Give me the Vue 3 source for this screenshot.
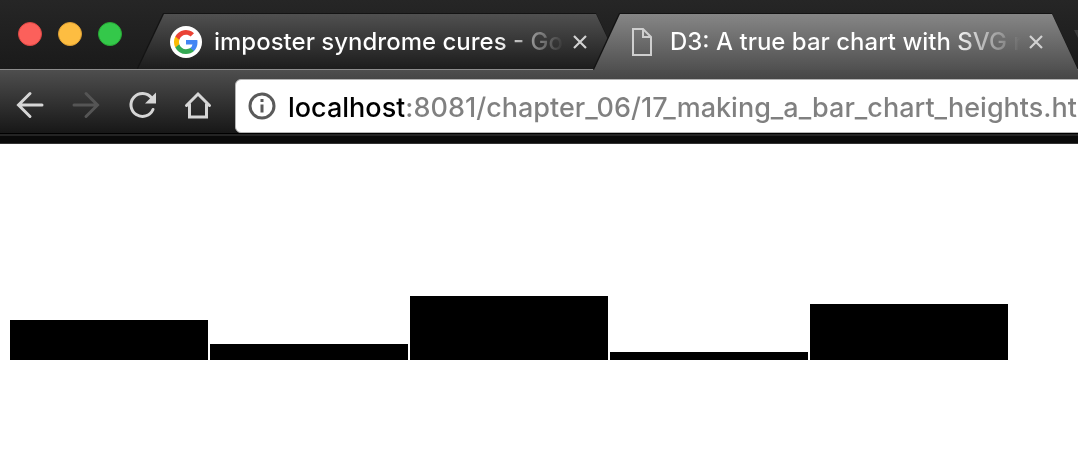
<script setup>
import { ref } from 'vue'

const url = ref('localhost:8081/chapter_06/17_making_a_bar_chart_heights.html')
const tabs = [
  { title: 'imposter syndrome cures - Google Search', icon: 'google', active: false },
  { title: 'D3: A true bar chart with SVG rects', icon: 'page', active: true },
]
const dataset = [5, 2, 8, 1, 7]
const scale = 8
</script>

<template>
  <div class="browser">
    <header class="tabstrip">
      <div class="lights">
        <button class="light red" aria-label="Close window"></button>
        <button class="light yellow" aria-label="Minimize window"></button>
        <button class="light green" aria-label="Zoom window"></button>
      </div>
      <div class="tabs" role="tablist">
        <div v-for="t in tabs" :key="t.icon" class="tab-outline" :class="{ active: t.active }">
          <div class="tab">
            <svg v-if="t.icon === 'google'" class="favicon" viewBox="0 0 32 32" aria-hidden="true">
              <circle cx="16" cy="16" r="16" fill="#fff" />
              <g transform="translate(4 4)">
                <path fill="#4285f4" d="M23.5 12.3c0-.8-.1-1.6-.2-2.3H12v4.5h6.5a5.600 5.600 0 0 1-2.400 3.600v3h3.900c2.200-2.100 3.500-5.100 3.500-8.800z" />
                <path fill="#34a853" d="M12 24c3.200 0 6-1.100 8-2.900l-3.900-3c-1.100.7-2.500 1.200-4.100 1.200-3.100 0-5.800-2.100-6.700-5H1.300v3.100A12 12 0 0 0 12 24z" />
                <path fill="#fbbc05" d="M5.300 14.300a7.200 7.200 0 0 1 0-4.600V6.600h-4a12 12 0 0 0 0 10.800z" />
                <path fill="#ea4335" d="M12 4.800c1.800 0 3.300.6 4.600 1.800L20 3.200A12 12 0 0 0 1.300 6.600l4 3.100c.9-2.800 3.600-4.900 6.700-4.900z" />
              </g>
            </svg>
            <svg v-else class="favicon" viewBox="0 0 32 32" aria-hidden="true">
              <path d="M7 3h10l8 8v18H7zM17 3v8h8" fill="none" stroke="#cfcfcf" stroke-width="2" />
            </svg>
            <button class="title" role="tab" :aria-selected="t.active">{{ t.title }}</button>
            <button class="close" aria-label="Close tab">
              <svg viewBox="0 0 14 14" width="14" height="14">
                <path d="M1 1l12 12M13 1L1 13" stroke="#d2d2d2" stroke-width="2.200" />
              </svg>
            </button>
          </div>
        </div>
      </div>
      <button class="new-tab" aria-label="New tab"></button>
    </header>

    <nav class="toolbar">
      <button class="tool" aria-label="Back">
        <svg viewBox="0 0 32 32"><path d="M28 16H5M16 4.500L4.500 16 16 27.500" /></svg>
      </button>
      <button class="tool off" aria-label="Forward" disabled>
        <svg viewBox="0 0 32 32"><path d="M4 16h23M16 4.500L27.500 16 16 27.500" /></svg>
      </button>
      <button class="tool" aria-label="Reload">
        <svg viewBox="0 0 32 32">
          <path d="M25.500 8.800A11.500 11.500 0 1 0 27 20.500" />
          <path class="solid" d="M30 3.500v11H19z" />
        </svg>
      </button>
      <button class="tool" aria-label="Home">
        <svg viewBox="0 0 32 32"><path d="M4.500 16.500L16 5l11.500 11.500M7.500 15v13h17V15" /></svg>
      </button>
      <div class="address">
        <svg class="info" viewBox="0 0 28 28" aria-hidden="true">
          <circle cx="14" cy="14" r="12" fill="none" stroke="#5a5a5a" stroke-width="3" />
          <path d="M14 7v3M14 12.500v8" stroke="#5a5a5a" stroke-width="3" />
        </svg>
        <input v-model="url" class="url" type="text" aria-label="Address" spellcheck="false" />
      </div>
    </nav>
    <div class="bookmarks-edge"></div>

    <main class="chart" role="img" aria-label="Bar chart">
      <div v-for="(d, i) in dataset" :key="i" class="bar" :style="{ height: d * scale + 'px' }"></div>
    </main>
  </div>
</template>

<style>
body {
  margin: 0;
  background: #fff;
}
</style>

<style scoped>
.browser {
  font-family: Inter, "Liberation Sans", sans-serif;
  overflow: hidden;
}
button {
  border: 0;
  padding: 0;
  background: none;
  font: inherit;
}
.tabstrip {
  display: flex;
  height: 69px;
  border-bottom: 1px solid #8c8c8c;
  background: linear-gradient(#262626, #1a1a1a);
}
.lights {
  flex: none;
  display: flex;
  gap: 16px;
  width: 120px;
  padding: 22px 0 0 18px;
}
.light {
  width: 24px;
  height: 24px;
  border-radius: 50%;
}
.red {
  background: #fc605b;
  border: 1px solid #df4744;
}
.yellow {
  background: #fdbd41;
  border: 1px solid #dd9f33;
}
.green {
  background: #34c84a;
  border: 1px solid #27a934;
}
.tabs {
  flex: 1;
  display: flex;
  min-width: 0;
  padding-top: 14px;
}
.tab-outline {
  flex: 1;
  min-width: 0;
  height: 55px;
  filter: drop-shadow(0 -1px 0 #141414) drop-shadow(-1px 0 0 #141414);
}
.tab-outline.active {
  height: 56px;
  margin-left: -28px;
  z-index: 1;
}
.tab {
  display: flex;
  align-items: center;
  box-sizing: border-box;
  height: 100%;
  padding: 0 35px 0 32px;
  background: linear-gradient(#505050, #1c1c1c);
  clip-path: polygon(26px 0, calc(100% - 26px) 0, 100% 100%, 0 100%);
}
.active .tab {
  background: linear-gradient(#868686, #505050);
}
.favicon {
  flex: none;
  width: 32px;
  height: 32px;
}
.title {
  flex: 1;
  min-width: 0;
  margin-left: 12px;
  overflow: hidden;
  white-space: nowrap;
  text-align: left;
  font-size: 24px;
  line-height: 32px;
  font-weight: 500;
  color: transparent;
  background: linear-gradient(90deg, #fff calc(100% - 72px), transparent calc(100% - 2px));
  background-clip: text;
}
.close {
  flex: none;
  display: flex;
  margin-left: 6px;
}
.new-tab {
  flex: none;
  width: 40px;
  height: 32px;
  margin: 30px -36px 0 -4px;
  background: #3a3a3a;
  clip-path: polygon(0 0, 100% 0, 100% 100%, 16px 100%);
}
.toolbar {
  display: flex;
  align-items: center;
  height: 63px;
  padding-left: 2px;
  background: linear-gradient(#4e4e4e, #171717);
  border-bottom: 1px solid #000;
}
.tool {
  flex: none;
  width: 56px;
  height: 56px;
  padding-top: 10px;
}
.tool svg {
  width: 32px;
  height: 32px;
  fill: none;
  stroke: #d6d6d6;
  stroke-width: 3;
  stroke-linecap: round;
}
.tool .solid {
  fill: #d6d6d6;
  stroke: none;
}
.off svg {
  stroke: #555;
}
.address {
  flex: 1;
  display: flex;
  align-items: center;
  align-self: flex-end;
  box-sizing: border-box;
  min-width: 0;
  height: 54px;
  margin: 0 -8px 0 9px;
  padding-left: 12px;
  background: #fff;
  border: 1px solid #b4b4b4;
  border-radius: 6px;
}
.info {
  flex: none;
  width: 28px;
  height: 28px;
}
.url {
  flex: 1;
  min-width: 0;
  margin-left: 12px;
  padding: 4px 0 0;
  border: 0;
  outline: 0;
  font-family: inherit;
  font-size: 27px;
  font-weight: 500;
  line-height: 40px;
  color: transparent;
  background: linear-gradient(90deg, #000 116px, #808080 116px);
  background-clip: text;
}
.bookmarks-edge {
  height: 7px;
  background: #0a0a0a;
  border-top: 2px solid #242424;
  border-bottom: 1px solid #333;
}
.chart {
  display: flex;
  align-items: flex-end;
  gap: 2px;
  height: 216px;
  margin: 0 70px 0 10px;
}
.bar {
  flex: 1;
  background: #000;
}
</style>
